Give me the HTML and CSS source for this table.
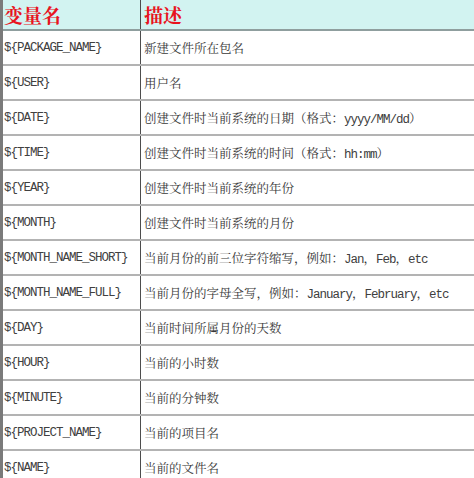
FILE: index.html
```html
<!DOCTYPE html>
<html lang="zh-CN">
<head>
<meta charset="utf-8">
<title>变量名</title>
<link rel="stylesheet" href="styles.css">
</head>
<body>
<table class="vars">
  <thead>
    <tr><th class="c1">变量名</th><th class="c2">描述</th></tr>
  </thead>
  <tbody>
    <tr><td class="c1 lat">${PACKAGE_NAME}</td><td class="c2">新建文件所在包名</td></tr>
    <tr><td class="c1 lat">${USER}</td><td class="c2">用户名</td></tr>
    <tr><td class="c1 lat">${DATE}</td><td class="c2">创建文件时当前系统的日期（格式：<span class="lat">yyyy/MM/dd</span>）</td></tr>
    <tr><td class="c1 lat">${TIME}</td><td class="c2">创建文件时当前系统的时间（格式：<span class="lat">hh:mm</span>）</td></tr>
    <tr><td class="c1 lat">${YEAR}</td><td class="c2">创建文件时当前系统的年份</td></tr>
    <tr><td class="c1 lat">${MONTH}</td><td class="c2">创建文件时当前系统的月份</td></tr>
    <tr><td class="c1 lat">${MONTH_NAME_SHORT}</td><td class="c2">当前月份的前三位字符缩写，例如：<span class="lat">Jan</span>，<span class="lat">Feb</span>，<span class="lat">etc</span></td></tr>
    <tr><td class="c1 lat">${MONTH_NAME_FULL}</td><td class="c2">当前月份的字母全写，例如：<span class="lat">January</span>，<span class="lat">February</span>，<span class="lat">etc</span></td></tr>
    <tr><td class="c1 lat">${DAY}</td><td class="c2">当前时间所属月份的天数</td></tr>
    <tr><td class="c1 lat">${HOUR}</td><td class="c2">当前的小时数</td></tr>
    <tr><td class="c1 lat">${MINUTE}</td><td class="c2">当前的分钟数</td></tr>
    <tr><td class="c1 lat">${PROJECT_NAME}</td><td class="c2">当前的项目名</td></tr>
    <tr><td class="c1 lat">${NAME}</td><td class="c2">当前的文件名</td></tr>
  </tbody>
</table>
</body>
</html>
```
FILE: styles.css
```css
html, body {
  margin: 0;
  padding: 0;
  background: #ffffff;
  overflow: hidden;
}
.vars {
  border-collapse: collapse;
  width: 480px;
  table-layout: fixed;
  border-left: 3px solid #7a7a7a;
  font-family: "Noto Serif CJK SC", "Noto Sans CJK SC", serif;
  font-size: 12.5px;
  color: #383838;
}
.vars th {
  height: 29px;
  background: #d2f3f1;
  color: #e8141e;
  font-size: 19px;
  font-weight: 700;
  text-align: left;
  padding: 0 0 0 1px;
  border-bottom: 2px solid #8f9e9e;
  line-height: 1;
}
.vars th.c2 {
  padding-left: 3px;
}
.vars td {
  height: 32px;
  padding: 1px 0 0 1px;
  border-bottom: 2px solid #b3b3b3;
  white-space: nowrap;
  vertical-align: middle;
}
.vars .c1 {
  width: 136px;
  border-right: 1px solid #4d4d4d;
}
.vars td.c2 {
  padding-left: 3px;
}
.lat {
  font-family: "Liberation Mono", monospace;
  font-size: 12.5px;
  letter-spacing: -1px;
  color: #404040;
}
```
